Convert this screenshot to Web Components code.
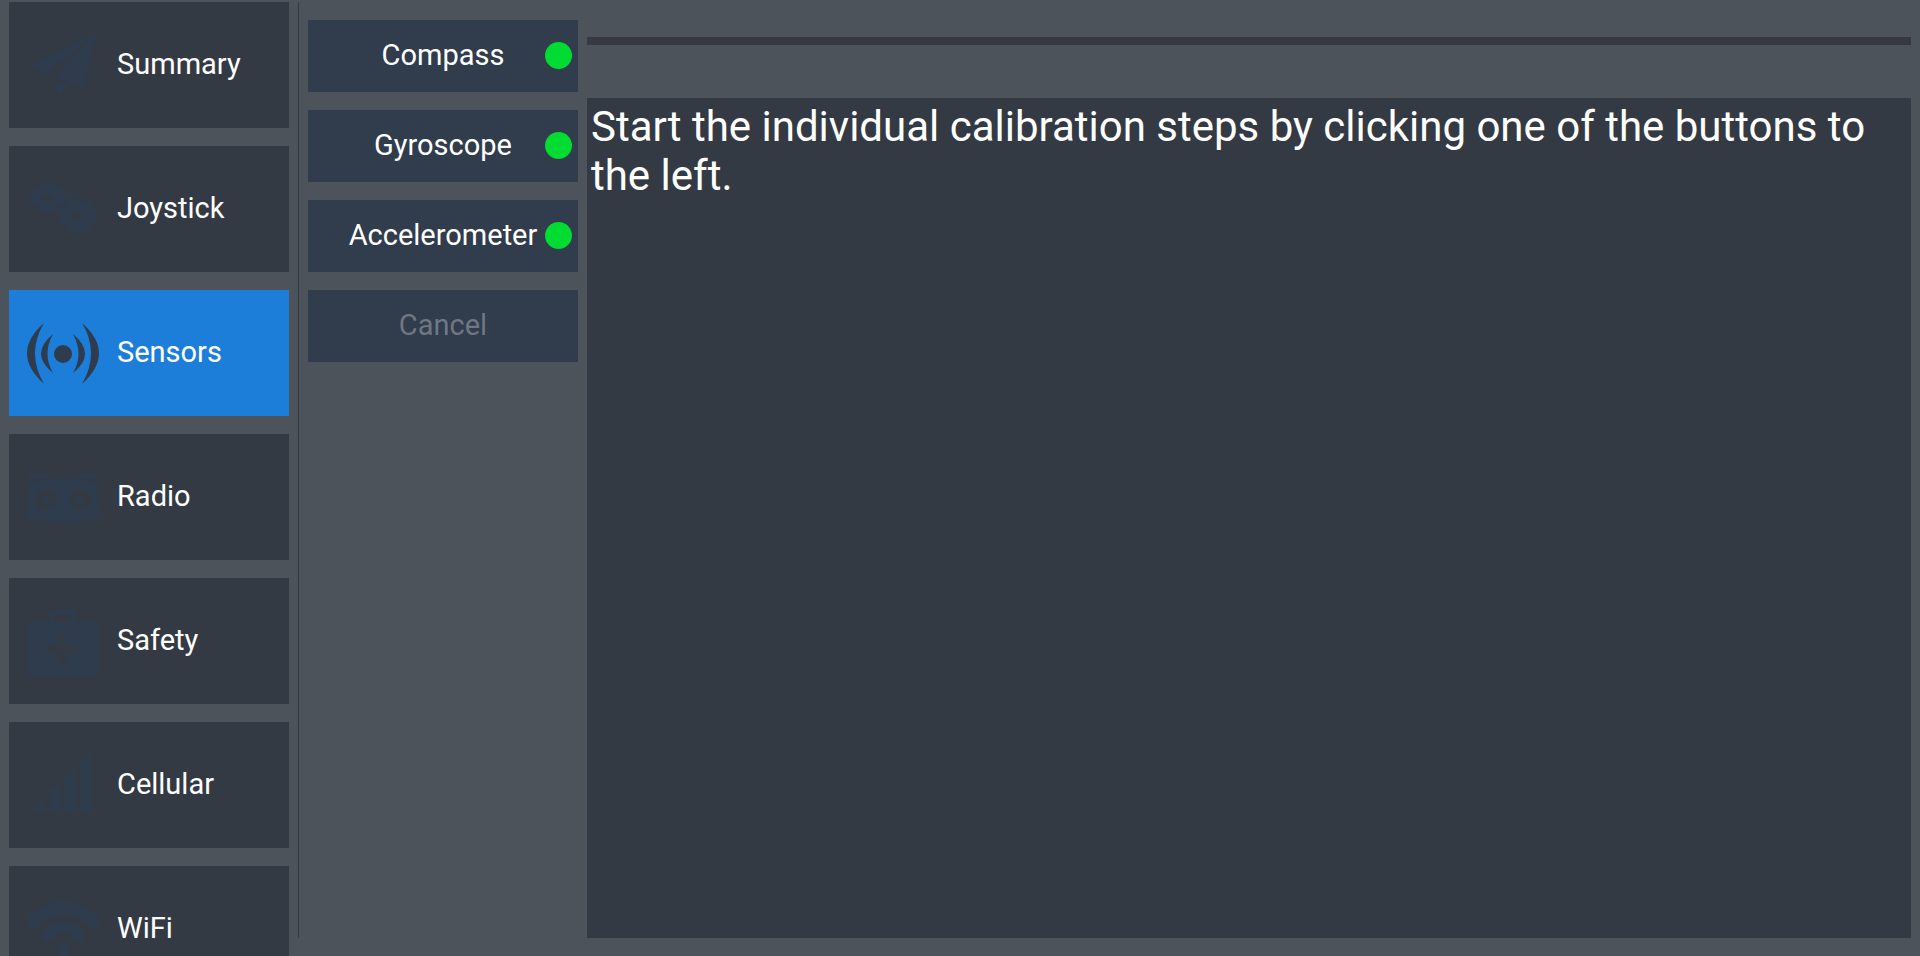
<!DOCTYPE html>
<html lang="en">
<head>
<meta charset="utf-8">
<meta name="viewport" content="width=device-width, initial-scale=1">
<title>Vehicle Setup</title>
<style>
  html, body { margin: 0; height: 100%; }
  body {
    --window: #4d535b;
    --panel: #333a43;
    --control: #313c4c;
    --accent: #1d7ed9;
    --ready: #00dc32;
    background: var(--window);
    color: #fff;
    font-family: Roboto, "Liberation Sans", sans-serif;
    font-size: 29px;
    line-height: 34px;
  }
</style>
</head>
<body>
<vehicle-setup>
  <setup-nav slot="nav">
    <nav-item icon="plane">Summary</nav-item>
    <nav-item icon="gears">Joystick</nav-item>
    <nav-item icon="sensors" current>Sensors</nav-item>
    <nav-item icon="radio">Radio</nav-item>
    <nav-item icon="medkit">Safety</nav-item>
    <nav-item icon="signal">Cellular</nav-item>
    <nav-item icon="wifi">WiFi</nav-item>
  </setup-nav>
  <sensor-actions slot="actions">
    <action-button ready>Compass</action-button>
    <action-button ready>Gyroscope</action-button>
    <action-button ready>Accelerometer</action-button>
    <action-button disabled>Cancel</action-button>
  </sensor-actions>
  <calibration-view>Start the individual calibration steps by clicking one of the buttons to the left.</calibration-view>
</vehicle-setup>

<script>
const ICONS = {
  plane: '<path d="M70 3 1 37l19 8z"/><path d="M70 3 56 58 29 49z"/><path d="m30 53 11 4-10 11z"/>',
  gears: '<g fill="none" stroke="currentColor"><ellipse cx="21" cy="25" rx="11" ry="8" stroke-width="10"/><ellipse cx="21" cy="25" rx="17" ry="13" stroke-width="4" stroke-dasharray="7 3"/><circle cx="51" cy="43" r="10" stroke-width="11"/><circle cx="51" cy="43" r="17" stroke-width="4" stroke-dasharray="8 3"/></g>',
  sensors: '<circle cx="36" cy="37" r="9"/><path d="M17 6Q-17 36 17 67Q-1 36 17 6z"/><path d="M55 6Q89 36 55 67Q73 36 55 6z"/><path d="M26 17Q2 37 26 56Q15 37 26 17z"/><path d="M46 17Q70 37 46 56Q57 37 46 17z"/>',
  radio: '<path d="M2 13h19v3L2 19zM51 13h19v6l-19-3z"/><path fill-rule="evenodd" d="M2 22Q36 13 70 22L72 57Q36 65 0 57zM18 29a10 10 0 1 0 0 20 10 10 0 0 0 0-20zM53 29a10 10 0 1 0 0 20 10 10 0 0 0 0-20z"/><circle cx="18" cy="39" r="4"/><circle cx="53" cy="39" r="4"/>',
  medkit: '<path fill-rule="evenodd" d="M5 17H22V9Q22 5 26 5H45Q49 5 49 9V17H66Q71 17 71 22V66Q71 71 66 71H5Q0 71 0 66V22Q0 17 5 17zM27 10V17H44V10zM31 29V41H19V49H31V61H39V49H51V41H39V29z"/>',
  signal: '<path d="M5 63 18 49V63zM24 63V40L33 34V63zM38 63V27L49 19V63zM54 63V12L64 3V63z"/>',
  wifi: '<g fill="none" stroke="currentColor" stroke-width="13" stroke-linecap="round"><path d="M6 29Q36 1 66 29"/><path stroke-width="12" d="M20 43Q36 26 52 43"/></g><circle cx="36" cy="57" r="7"/>'
};

function define(name, markup, setup) {
  const template = document.createElement('template');
  template.innerHTML = markup;
  customElements.define(name, class extends HTMLElement {
    constructor() {
      super();
      this.attachShadow({ mode: 'open' }).append(template.content.cloneNode(true));
      if (setup) setup(this, this.shadowRoot);
    }
  });
}

define('nav-item', `
  <style>
    :host { display: block; flex: none; }
    button {
      display: flex; align-items: center; gap: 18px;
      box-sizing: border-box; width: 100%; height: 126px;
      margin: 0; padding: 0 18px; border: 0; border-radius: 0;
      background: var(--panel); color: inherit; font: inherit; text-align: left;
    }
    :host([current]) button { background: var(--accent); }
    svg { flex: none; width: 72px; height: 72px; color: #2f3c4e; fill: currentColor; }
    span { padding-bottom: 2px; }
  </style>
  <button type="button"><svg viewBox="0 0 72 72" aria-hidden="true"></svg><span><slot></slot></span></button>
`, (host, root) => {
  root.querySelector('svg').innerHTML = ICONS[host.getAttribute('icon')] || '';
  if (host.hasAttribute('current')) root.querySelector('button').setAttribute('aria-current', 'page');
});

define('setup-nav', `
  <style>
    :host { display: block; min-height: 0; overflow: hidden; }
    nav { display: flex; flex-direction: column; gap: 18px; padding: 2px 9px 0; }
  </style>
  <nav aria-label="Vehicle setup"><slot></slot></nav>
`);

define('action-button', `
  <style>
    :host { display: block; }
    button {
      position: relative; display: block; box-sizing: border-box; width: 100%; height: 72px;
      margin: 0; padding: 0 0 2px; border: 0; border-radius: 0;
      background: var(--control); color: inherit; font: inherit; text-align: center;
    }
    button:disabled { color: #707782; }
    i { display: none; }
    :host([ready]) i {
      display: block; position: absolute; right: 6px; top: 22px;
      width: 27px; height: 27px; border-radius: 50%; background: var(--ready);
    }
  </style>
  <button type="button"><slot></slot><i></i></button>
`, (host, root) => {
  root.querySelector('button').disabled = host.hasAttribute('disabled');
});

define('sensor-actions', `
  <style>
    :host { display: flex; flex-direction: column; gap: 18px; padding-top: 18px; }
  </style>
  <slot></slot>
`);

define('calibration-view', `
  <style>
    :host { display: flex; flex-direction: column; min-width: 0; padding-top: 35px; }
    progress {
      appearance: none; -webkit-appearance: none; display: block;
      width: 100%; height: 8px; margin-bottom: 53px; border: 0; background: #363941;
    }
    progress::-webkit-progress-bar { background: #363941; }
    progress::-webkit-progress-value { background: var(--ready); }
    section { flex: 1; background: var(--panel); padding: 4px; }
    p { margin: 0; font-size: 42px; line-height: 49px; }
  </style>
  <progress value="0" max="1" aria-label="Calibration progress"></progress>
  <section><p><slot></slot></p></section>
`);

define('vehicle-setup', `
  <style>
    :host {
      display: grid; grid-template-columns: 298px minmax(0, 1fr);
      height: 100vh; overflow: hidden;
    }
    main {
      display: grid; grid-template-columns: 270px minmax(0, 1fr); gap: 9px;
      margin: 2px 9px 18px 0; padding-left: 9px; border-left: 1px solid var(--panel);
    }
  </style>
  <slot name="nav"></slot>
  <main><slot name="actions"></slot><slot></slot></main>
`);
</script>
</body>
</html>
